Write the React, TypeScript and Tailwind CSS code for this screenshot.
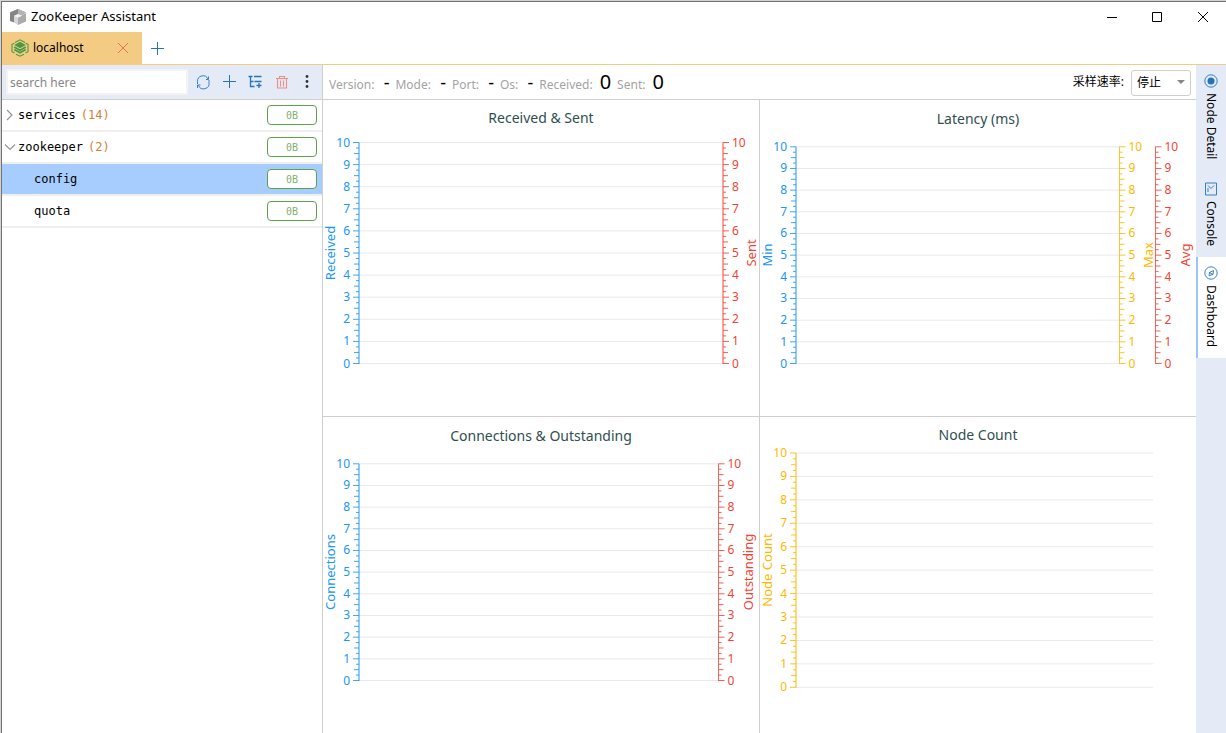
import type { ReactNode } from "react";

const BLUE = "#2196f3";
const RED = "#f44336";
const AMBER = "#ffb800";

type Axis = {
  x: number;
  side: "left" | "right";
  color: string;
  name: string;
  nameX: number;
  wide?: boolean;
};

type ChartProps = {
  title: string;
  titleY: number;
  top: number;
  bottom: number;
  gridEnd: number;
  nameY: number;
  axes: Axis[];
};

function Chart({ title, titleY, top, bottom, gridEnd, nameY, axes }: ChartProps) {
  const step = (bottom - top) / 10;
  const majors = Array.from({ length: 11 }, (_, i) => i);
  const ticks = Array.from({ length: 41 }, (_, i) => i);
  return (
    <div className="min-h-0 min-w-0 bg-white">
      <svg
        viewBox="0 0 436 316"
        className="h-full w-full overflow-visible font-['Noto_Sans',sans-serif]"
        role="img"
        aria-label={title}
      >
        <text x="218" y={titleY} textAnchor="middle" className="fill-[#2f4f4f] text-[14px]">
          {title}
        </text>
        {majors.map((i) => (
          <line key={i} x1="36" x2={gridEnd} y1={bottom - i * step} y2={bottom - i * step} stroke="#e9e9e9" />
        ))}
        {axes.map((a) => {
          const dir = a.side === "left" ? -1 : 1;
          return (
            <g key={a.name} fill={a.color}>
              <line
                x1={a.x}
                x2={a.x}
                y1={top}
                y2={bottom + 0.5}
                stroke={a.color}
                strokeWidth={a.wide ? 2 : 1}
                strokeOpacity={a.wide ? 0.5 : 0.8}
              />
              {ticks.map((i) => {
                const len = i % 4 === 0 ? 6 : i % 2 === 0 ? 5 : 3;
                const y = bottom - (i * step) / 4;
                return (
                  <line
                    key={i}
                    x1={a.x}
                    x2={a.x + dir * len}
                    y1={y}
                    y2={y}
                    stroke={a.color}
                    strokeOpacity="0.85"
                  />
                );
              })}
              {majors.map((i) => (
                <text
                  key={i}
                  x={a.x + dir * 9}
                  y={bottom - i * step + 4}
                  textAnchor={a.side === "left" ? "end" : "start"}
                  className="text-[12px]"
                >
                  {i}
                </text>
              ))}
              <text
                transform={`translate(${a.nameX} ${nameY}) rotate(-90)`}
                textAnchor="middle"
                className="text-[13px]"
              >
                {a.name}
              </text>
            </g>
          );
        })}
      </svg>
    </div>
  );
}

function ToolButton({ label, children }: { label: string; children: ReactNode }) {
  return (
    <button aria-label={label} className="flex h-[26px] w-[26px] items-center justify-center">
      <svg viewBox="0 0 16 16" className="size-4" fill="none" stroke="#2374bf" strokeWidth="1">
        {children}
      </svg>
    </button>
  );
}

function TreeRow({
  name,
  count,
  state,
  selected,
}: {
  name: string;
  count?: string;
  state?: "open" | "closed";
  selected?: boolean;
}) {
  return (
    <li
      className={`flex h-8 items-center border-b-2 border-[#efefef] pr-[5px] font-['DejaVu_Sans_Mono',monospace] text-[12px] ${
        selected ? "bg-[#a6cdfd]" : "bg-white"
      } ${state ? "pl-0.5" : "pl-8"}`}
    >
      {state && (
        <button aria-label={state === "open" ? `Collapse ${name}` : `Expand ${name}`} className="mr-0.5 w-3">
          <svg viewBox="0 0 12 12" className="size-3" fill="none" stroke="#92979e" strokeWidth="1.2">
            {state === "open" ? <path d="M1 3.5 6 8.5 11 3.5" /> : <path d="M3 1 8 6 3 11" />}
          </svg>
        </button>
      )}
      <span className="flex flex-1 gap-[5px] text-black">
        <span>{name}</span>
        {count && <span className="text-[#d48237]">{count}</span>}
      </span>
      <span className="flex h-5 w-[50px] items-center justify-center rounded-[4px] border border-[#5da24a] bg-white text-[10px] text-[#7fb070]">
        0B
      </span>
    </li>
  );
}

function Stat({ label, value, large }: { label: string; value: string; large?: boolean }) {
  return (
    <div className="flex items-baseline gap-[7px]">
      <dt className="text-[12px] text-[#a3a3a3]">{label}:</dt>
      <dd className={`min-w-2 text-right text-black ${large ? "text-[20px]" : "text-[18px]"}`}>{value}</dd>
    </div>
  );
}

function SideTab({
  label,
  active,
  height,
  children,
}: {
  label: string;
  active?: boolean;
  height: string;
  children: ReactNode;
}) {
  return (
    <button
      className={`flex w-full flex-col items-center gap-1 border-l-2 pr-0.5 pt-2 ${height} ${
        active ? "border-[#99c5fb] bg-white" : "border-transparent"
      }`}
    >
      <svg viewBox="0 0 16 16" className="size-4 shrink-0" fill="none" stroke="#2374bf" strokeWidth="0.9">
        {children}
      </svg>
      <span className="text-[12px] leading-4 text-black [writing-mode:vertical-rl]">{label}</span>
    </button>
  );
}

export default function App() {
  return (
    <div className="h-screen overflow-hidden border-l border-t border-[#d2d2d2] bg-white font-['Noto_Sans','Noto_Sans_CJK_SC',sans-serif]">
      <div className="flex h-full flex-col border-l border-t border-[#747474]">
        <header className="flex h-[30px] shrink-0 items-center pl-[7px]">
          <svg viewBox="0 0 18 18" className="mr-1 size-[18px]">
            <path d="M9 1 17 4.5 9 8 1 4.5Z" fill="#a2a2a2" />
            <path d="M1 4.5 9 1v5L5 8v6.5L1 13Z" fill="#858585" />
            <path d="M9 1 17 4.5 13 7.500 9 6Z" fill="#b3b3b3" />
            <path d="M5 8 9 6v11l-4-2.5Z" fill="#d7d7d7" />
            <path d="M9 9.5 17 5v8.500L9 17Z" fill="#ababab" />
            <path d="M9 6 13 7.8 9 9.5 5 8Z" fill="#f4f4f4" />
          </svg>
          <h1 className="flex-1 text-[13px] text-black">ZooKeeper Assistant</h1>
          <div className="flex h-full">
            <button aria-label="Minimize" className="flex w-[45px] items-center justify-center">
              <svg viewBox="0 0 10 10" className="size-[10px]" stroke="#000">
                <path d="M0 5.5h10" />
              </svg>
            </button>
            <button aria-label="Maximize" className="flex w-[46px] items-center justify-center">
              <svg viewBox="0 0 10 10" className="size-[10px]" stroke="#000" fill="none">
                <path d="M.5.5h9v9h-9z" />
              </svg>
            </button>
            <button aria-label="Close" className="flex w-[46px] items-center justify-center">
              <svg viewBox="0 0 10 10" className="size-[10px]" stroke="#000">
                <path d="m0 0 10 10M10 0 0 10" />
              </svg>
            </button>
          </div>
        </header>

        <nav className="flex h-[33px] shrink-0 border-b border-[#f4cb83]">
          <div className="flex w-[140px] items-center bg-[#f4cb83] pl-[9px] pr-[13px]">
            <svg viewBox="0 0 18 18" className="mr-1 size-[18px]" fill="none" stroke="#4a9a45" strokeWidth="1.1">
              <path d="M4 3.4 9 .8l5 2.6M3.400 4.200 1 5.300v7.400l2.600 1.300M14.600 4.200 17 5.300v7.400L14.400 14M5 15.200l4 2 4-2" />
              <path d="M9 2.800 14.800 6 9 9.200 3.200 6Z" fill="#4a9a45" stroke="none" />
              <path d="m3.200 8 5.800 3.200L14.800 8M3.200 10.600 9 13.800l5.800-3.200" strokeWidth="1.700" />
            </svg>
            <a href="#localhost" className="flex-1 text-[12px] text-black">
              localhost
            </a>
            <button aria-label="Close localhost">
              <svg viewBox="0 0 12 12" className="size-3" stroke="#ef6f5c">
                <path d="m1 1 10 10M11 1 1 11" />
              </svg>
            </button>
          </div>
          <button aria-label="New tab" className="flex w-[31px] items-center justify-center">
            <svg viewBox="0 0 13 13" className="size-[13px]" stroke="#2374bf">
              <path d="M0 6.5h13M6.5 0v13" />
            </svg>
          </button>
        </nav>

        <div className="flex min-h-0 flex-1">
          <aside className="flex w-[321px] shrink-0 flex-col border-r border-[#cfcfcf]">
            <div className="flex h-[35px] shrink-0 items-center border-b border-[#cfcfcf] bg-[#e4eaf6] pl-1 pr-0.5">
              <input
                type="text"
                aria-label="Search"
                placeholder="search here"
                className="mr-0.5 h-[26px] min-w-0 flex-1 border-2 border-[#f3f3f3] bg-white px-0.5 text-[12px] outline-none placeholder:text-[#858585]"
              />
              <ToolButton label="Refresh">
                <path
                  d="M2.500 10V7.500A5.500 5.500 0 0 1 13 5M14 6v2.500A5.500 5.500 0 0 1 3.500 11.500M13.500 2.500V5.500H11M2.500 14v-3H5.500"
                  strokeWidth="0.9"
                />
              </ToolButton>
              <ToolButton label="Add node">
                <path d="M2 7.5h13M8.5 1v13" />
              </ToolButton>
              <ToolButton label="Add child node">
                <path d="M1.500 2.500h4M3.500 2.500v10h4M3.500 7.500h3M7 2.500h7.500M7.500 7.500h7" strokeWidth="1.3" />
                <path d="M9.500 11.500h5M12 9v5" strokeWidth="1.300" />
              </ToolButton>
              <ToolButton label="Delete">
                <path
                  d="M3 4.500h12M6.500 4V2.500h5V4M4.500 5v9h9V5M7.500 6.500v6M10.500 6.500v6"
                  stroke="#ee8f86"
                  strokeWidth="1.1"
                />
              </ToolButton>
              <ToolButton label="More">
                <g fill="#333" stroke="none">
                  <circle cx="8" cy="2.500" r="1.400" />
                  <circle cx="8" cy="7.500" r="1.400" />
                  <circle cx="8" cy="12.500" r="1.400" />
                </g>
              </ToolButton>
            </div>
            <ul>
              <TreeRow name="services" count="(14)" state="closed" />
              <TreeRow name="zookeeper" count="(2)" state="open" />
              <TreeRow name="config" selected />
              <TreeRow name="quota" />
            </ul>
          </aside>

          <main className="flex min-w-0 flex-1 flex-col">
            <div className="flex h-[35px] shrink-0 items-center justify-between border-b border-[#cfcfcf] pl-1.5 pr-[5px]">
              <dl className="flex items-baseline gap-1.5">
                <Stat label="Version" value="-" />
                <Stat label="Mode" value="-" />
                <Stat label="Port" value="-" />
                <Stat label="Os" value="-" />
                <Stat label="Received" value="0" large />
                <Stat label="Sent" value="0" large />
              </dl>
              <div className="flex items-center gap-[7px]">
                <label htmlFor="rate" className="text-[12px] text-black">
                  采样速率:
                </label>
                <div className="relative">
                  <select
                    id="rate"
                    className="h-[26px] w-[60px] appearance-none rounded-[3px] border border-[#cfcfcf] bg-white pl-[5px] text-[12px] text-black"
                  >
                    <option>停止</option>
                  </select>
                  <svg viewBox="0 0 8 4" className="pointer-events-none absolute right-1.5 top-[11px] h-1 w-2">
                    <path d="M0 0h8L4 4Z" fill="#85858c" />
                  </svg>
                </div>
              </div>
            </div>

            <div className="grid min-h-0 flex-1 grid-cols-2 grid-rows-2 gap-px bg-[#cfcfcf]">
              <Chart
                title="Received & Sent"
                titleY={23}
                top={42.5}
                bottom={263.5}
                gridEnd={400}
                nameY={153}
                axes={[
                  { x: 36, side: "left", color: BLUE, name: "Received", nameX: 12, wide: true },
                  { x: 400, side: "right", color: RED, name: "Sent", nameX: 433, wide: true },
                ]}
              />
              <Chart
                title="Latency (ms)"
                titleY={24}
                top={46.8}
                bottom={263.5}
                gridEnd={360}
                nameY={155}
                axes={[
                  { x: 36, side: "left", color: BLUE, name: "Min", nameX: 12, wide: true },
                  { x: 359.5, side: "right", color: AMBER, name: "Max", nameX: 393 },
                  { x: 395.5, side: "right", color: RED, name: "Avg", nameX: 430 },
                ]}
              />
              <Chart
                title="Connections & Outstanding"
                titleY={24}
                top={46.8}
                bottom={263.5}
                gridEnd={396}
                nameY={155}
                axes={[
                  { x: 36, side: "left", color: BLUE, name: "Connections", nameX: 12, wide: true },
                  { x: 395.5, side: "right", color: RED, name: "Outstanding", nameX: 430 },
                ]}
              />
              <Chart
                title="Node Count"
                titleY={23}
                top={36}
                bottom={270.3}
                gridEnd={393}
                nameY={153}
                axes={[{ x: 36, side: "left", color: AMBER, name: "Node Count", nameX: 12, wide: true }]}
              />
            </div>
          </main>

          <nav className="w-[30px] shrink-0 bg-[#e4eaf6]">
            <SideTab label="Node Detail" height="h-[108px]">
              <circle cx="8" cy="8" r="6.2" />
              <circle cx="8" cy="8" r="3.5" fill="#2374bf" stroke="none" />
            </SideTab>
            <SideTab label="Console" height="h-[84px]">
              <path d="M2.500 2h11v12h-11zM11 4.500 8 7.500 5 4.500M5 7v4" />
            </SideTab>
            <SideTab label="Dashboard" active height="h-[101px]">
              <circle cx="8" cy="8" r="6.2" />
              <path d="M6 10.500 6.500 7.500 10.500 5.500 10 9.500ZM6.500 7.500 10 9.500" />
            </SideTab>
          </nav>
        </div>
      </div>
    </div>
  );
}
